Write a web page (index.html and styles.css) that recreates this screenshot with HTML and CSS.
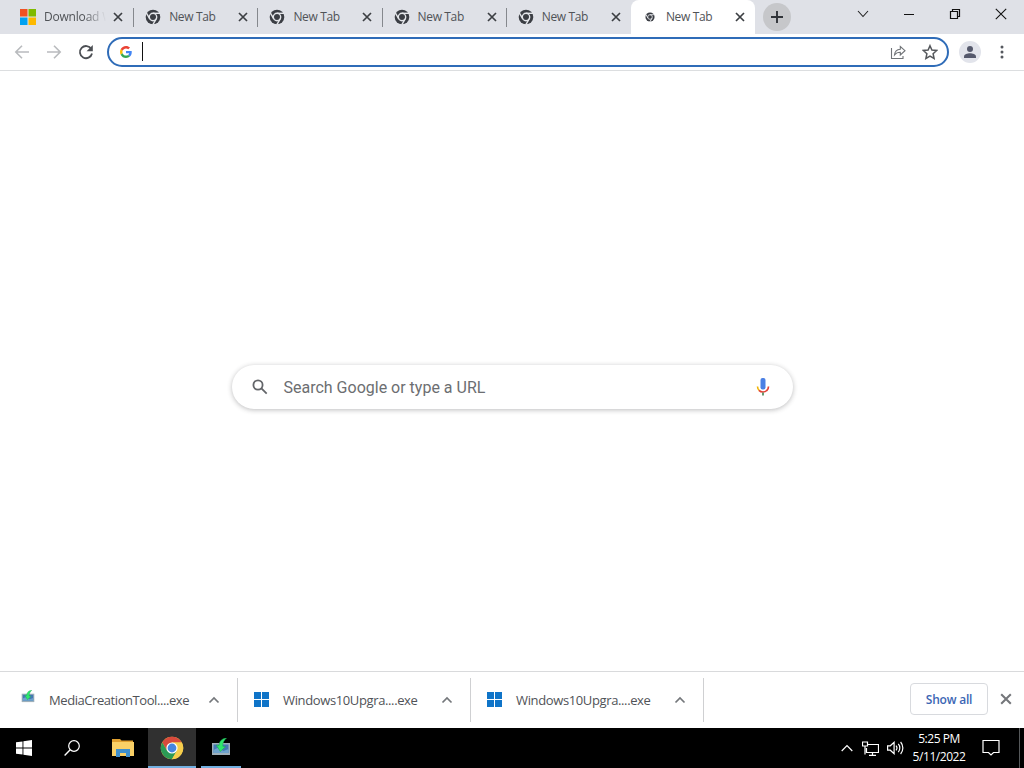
FILE: index.html
```
<!DOCTYPE html>
<html lang="en">
<head>
    <meta charset="UTF-8">
    <meta name="viewport" content="width=device-width, initial-scale=1.0">
    <title>New Tab</title>
    <link rel="stylesheet" href="styles.css">
</head>
<body>
    <!-- Shared icons -->
    <svg class="defs" width="0" height="0">
        <symbol id="chrome-gray" viewBox="0 0 16 16">
            <circle cx="8" cy="8" r="7.3" fill="#3b3e44"/>
            <g fill="none" stroke="#e4e6ea" stroke-width="1.4">
                <circle cx="8" cy="8" r="3.700"/>
                <path d="M8 4.300h7"/>
                <path d="M8 4.300h7" transform="rotate(120 8 8)"/>
                <path d="M8 4.300h7" transform="rotate(240 8 8)"/>
            </g>
        </symbol>
        <symbol id="cross" viewBox="0 0 10 10">
            <path d="M1 1l8 8M9 1L1 9" fill="none" stroke="currentColor" stroke-width="1.7"/>
        </symbol>
        <symbol id="chevron-up" viewBox="0 0 12 8">
            <path d="M1.500 6.500L6 2l4.500 4.500" fill="none" stroke="currentColor" stroke-width="1.700"/>
        </symbol>
        <symbol id="windows-blue" viewBox="0 0 15 15">
            <path d="M0 0h7v7H0zM8 0h7v7H8zM0 8h7v7H0zM8 8h7v7H8z" fill="#0f74c8"/>
        </symbol>
        <symbol id="media-tool" viewBox="0 0 20 18">
            <path d="M1 5h18v12H1z" fill="#9fb0ba"/>
            <path d="M2.500 6.500h15V15h-15z" fill="#4479b4"/>
            <path d="M2.500 12l4-2 6 3 5-2v4h-15z" fill="#6ea3cc"/>
            <path d="M15.500 0C11 .5 8.300 3 8 7.500L5.300 7l4 6.500L14.500 8.700l-2.700-.5C11.600 4.800 13 2.200 15.500 0z" fill="#2ee86c" stroke="#1ca250" stroke-width=".5"/>
        </symbol>
    </svg>

    <div class="tab-strip">
        <div class="tab first">
            <svg class="favicon" viewBox="0 0 16 16">
                <path d="M0 0h7.500v7.500H0z" fill="#f05122"/>
                <path d="M8.500 0H16v7.500H8.500z" fill="#7fba00"/>
                <path d="M0 8.500h7.500V16H0z" fill="#00a1f1"/>
                <path d="M8.500 8.500H16V16H8.500z" fill="#fdb900"/>
            </svg>
            <span class="tab-title fade">Download W</span>
            <svg class="tab-close"><use href="#cross"/></svg>
        </div>
        <div class="tab">
            <svg class="favicon"><use href="#chrome-gray"/></svg>
            <span class="tab-title">New Tab</span>
            <svg class="tab-close"><use href="#cross"/></svg>
        </div>
        <div class="tab">
            <svg class="favicon"><use href="#chrome-gray"/></svg>
            <span class="tab-title">New Tab</span>
            <svg class="tab-close"><use href="#cross"/></svg>
        </div>
        <div class="tab">
            <svg class="favicon"><use href="#chrome-gray"/></svg>
            <span class="tab-title">New Tab</span>
            <svg class="tab-close"><use href="#cross"/></svg>
        </div>
        <div class="tab last">
            <svg class="favicon"><use href="#chrome-gray"/></svg>
            <span class="tab-title">New Tab</span>
            <svg class="tab-close"><use href="#cross"/></svg>
        </div>
        <div class="tab active">
            <svg class="favicon small"><use href="#chrome-gray"/></svg>
            <span class="tab-title">New Tab</span>
            <svg class="tab-close"><use href="#cross"/></svg>
        </div>
        <div class="new-tab">
            <svg width="12" height="12" viewBox="0 0 12 12"><path d="M6 0v12M0 6h12" stroke="#303338" stroke-width="1.900"/></svg>
        </div>
        <div class="window-buttons">
            <div><svg width="12" height="12" viewBox="0 0 12 12"><path d="M1 3l5 5.500L11 3" fill="none" stroke="#222" stroke-width="1.100"/></svg></div>
            <div><svg width="12" height="12" viewBox="0 0 12 12"><path d="M1 6.500h10" stroke="#111"/></svg></div>
            <div><svg width="12" height="12" viewBox="0 0 12 12"><path d="M1.500 3.500h7v7h-7zM3.500 3V1.500h7v7H9" fill="none" stroke="#111" stroke-width="1.200"/></svg></div>
            <div><svg width="12" height="12" viewBox="0 0 12 12"><path d="M.8 .8l10.400 10.400M11.200 .8L.8 11.200" stroke="#111" stroke-width="1.100"/></svg></div>
        </div>
    </div>

    <div class="toolbar">
        <div class="nav-buttons">
            <svg class="disabled" viewBox="0 0 16 16"><path d="M15 8H2M8 1.800L1.800 8 8 14.200"/></svg>
            <svg class="disabled" viewBox="0 0 16 16"><path d="M1 8h13M8 1.800L14.200 8 8 14.200"/></svg>
            <svg class="reload" viewBox="0 0 16 16"><path d="M13.300 5A6.100 6.100 0 1 0 14 9.500"/><path class="tip" d="M14.800 1v6.200H8.600z"/></svg>
        </div>
        <div class="omnibox">
            <svg class="google" viewBox="0 0 48 48">
                <path fill="#ea4335" d="M24 9.500c3.540 0 6.710 1.220 9.210 3.600l6.850-6.850C35.900 2.380 30.470 0 24 0 14.620 0 6.510 5.380 2.560 13.220l7.980 6.190C12.430 13.720 17.740 9.500 24 9.500z"/>
                <path fill="#4285f4" d="M46.980 24.550c0-1.570-.15-3.090-.38-4.550H24v9.020h12.940c-.58 2.960-2.260 5.480-4.780 7.180l7.730 6c4.510-4.180 7.090-10.360 7.090-17.650z"/>
                <path fill="#fbbc05" d="M10.530 28.590c-.48-1.450-.76-2.990-.76-4.590s.27-3.140.76-4.590l-7.980-6.190C.92 16.460 0 20.120 0 24c0 3.880.92 7.540 2.560 10.780l7.970-6.190z"/>
                <path fill="#34a853" d="M24 48c6.480 0 11.930-2.130 15.890-5.810l-7.730-6c-2.150 1.450-4.920 2.300-8.160 2.300-6.260 0-11.570-4.220-13.470-9.910l-7.980 6.190C6.510 42.620 14.620 48 24 48z"/>
            </svg>
            <span class="caret"></span>
            <svg class="share" viewBox="0 0 16 16"><path d="M1.500 4v10.500H13V12M4.500 11c.3-3.800 2.500-5.600 5.800-5.800V2.500L15 6.700l-4.700 4.200V8.300C7.800 8.300 6 9 4.500 11z"/></svg>
            <svg class="star" viewBox="0 0 16 16"><path d="M8 1.700l1.900 4.400 4.800.4-3.600 3.200 1 4.700L8 12l-4.100 2.400 1-4.700L1.300 6.500l4.800-.4z"/></svg>
        </div>
        <div class="avatar">
            <svg width="14" height="14" viewBox="0 0 14 14"><circle cx="7" cy="4" r="3" fill="#55596c"/><path d="M1 13v-1.500C1 9.300 4.500 8.300 7 8.300s6 1 6 3.200V13z" fill="#55596c"/></svg>
        </div>
        <svg class="menu" width="4" height="14" viewBox="0 0 4 14"><g fill="#55585e"><circle cx="2" cy="2" r="1.500"/><circle cx="2" cy="7" r="1.500"/><circle cx="2" cy="12" r="1.500"/></g></svg>
    </div>

    <div class="page">
        <div class="search-box">
            <svg class="search-icon" viewBox="0 0 16 16"><circle cx="6" cy="6" r="4.600"/><path d="M9.400 9.400l5.300 5.300"/></svg>
            <span class="search-text">Search Google or type a URL</span>
            <svg class="mic" viewBox="0 0 14 18">
                <rect x="4.500" y="0" width="5" height="11.500" rx="2" fill="#4b80e4"/>
                <path d="M1.500 8.500c0 1.800.8 3.300 2 4.200" fill="none" stroke="#f0b400" stroke-width="1.600"/>
                <path d="M3 12.300c2.200 2.300 5.700 2.200 7.800.2 1.200-1 1.700-2.400 1.700-4" fill="none" stroke="#e24135" stroke-width="1.700"/>
                <path d="M7 14.500v3" stroke="#4d8a5a" stroke-width="1.700"/>
            </svg>
        </div>
    </div>

    <div class="downloads">
        <div class="download">
            <svg class="file-icon tool"><use href="#media-tool"/></svg>
            <span class="file-name media">MediaCreationTool....exe</span>
            <svg class="chevron"><use href="#chevron-up"/></svg>
        </div>
        <div class="download">
            <svg class="file-icon"><use href="#windows-blue"/></svg>
            <span class="file-name">Windows10Upgra....exe</span>
            <svg class="chevron"><use href="#chevron-up"/></svg>
        </div>
        <div class="download">
            <svg class="file-icon"><use href="#windows-blue"/></svg>
            <span class="file-name">Windows10Upgra....exe</span>
            <svg class="chevron"><use href="#chevron-up"/></svg>
        </div>
        <button class="show-all" type="button">Show all</button>
        <svg class="close-shelf"><use href="#cross"/></svg>
    </div>

    <div class="taskbar">
        <div class="task">
            <svg width="16" height="16" viewBox="0 0 16 16"><path d="M0 2.300L6.500 1.400v6.100H0zM7.400 1.200L16 0v7.500H7.400zM0 8.400h6.500v6.200L0 13.700zM7.400 8.400H16V16l-8.600-1.200z" fill="#fff"/></svg>
        </div>
        <div class="task">
            <svg width="16" height="16" viewBox="0 0 16 16"><circle cx="10" cy="6" r="5.300" fill="none" stroke="#fff" stroke-width="1.200"/><path d="M6.200 9.800L.6 15.400" stroke="#fff" stroke-width="1.400"/></svg>
        </div>
        <div class="task folder">
            <svg width="22" height="18" viewBox="0 0 22 18">
                <path d="M0 0h8l1.500 1.500H21V5H0z" fill="#e0a030"/>
                <path d="M0 3h22v14H0z" fill="#f9d067"/>
                <path d="M4 18v-8h14v8h-4v-4H8v4z" fill="#3f8fcc"/>
            </svg>
        </div>
        <div class="task running current">
            <svg width="24" height="24" viewBox="0 0 24 24">
                <circle cx="12" cy="12" r="11.200" fill="#f6cd4c"/>
                <path d="M2.300 6.400A11.200 11.200 0 0 1 21.700 6.400H12L7.150 14.800z" fill="#d84a3c"/>
                <path d="M2.300 6.400A11.200 11.200 0 0 0 12 23.200L16.850 14.800H7.150z" fill="#2b9a55"/>
                <path d="M21.700 6.400A11.200 11.200 0 0 1 12 23.200L16.850 14.800 12 6.400z" fill="#f6cd4c"/>
                <circle cx="12" cy="12" r="5.600" fill="#fff"/>
                <circle cx="12" cy="12" r="4.400" fill="#4685e0"/>
            </svg>
        </div>
        <div class="task running tool-task">
            <svg width="20" height="18"><use href="#media-tool"/></svg>
        </div>
        <div class="tray">
            <svg class="tray-up" viewBox="0 0 12 8"><path d="M.7 7L6 1.500 11.300 7"/></svg>
            <svg class="network" viewBox="0 0 17 15"><path d="M6 3.500h10.500v8H4.500V7M.5 1h5v4h-5zM3 5v8.500M7 14.300h7M10.500 11.500v2.500"/></svg>
            <svg class="volume" viewBox="0 0 17 14"><path d="M.6 4.800h2.700l3.800-3.500v11.400L3.300 9.200H.6zM9 4.700c1.100 1.300 1.100 3.300 0 4.600M11.300 2.900c2 2.300 2 5.900 0 8.200M13.600 1c3 3.400 3 8.600 0 12"/></svg>
            <div class="clock">
                <div class="time">5:25 PM</div>
                <div class="date">5/11/2022</div>
            </div>
            <svg class="notice" viewBox="0 0 18 18"><path d="M1 1.500h16v12h-5.500L9 16l-2.500-2.500H1z"/></svg>
        </div>
    </div>
</body>
</html>
```
FILE: styles.css
```
* {
    box-sizing: border-box;
}
body {
    margin: 0;
    width: 1024px;
    height: 768px;
    overflow: hidden;
    display: flex;
    flex-direction: column;
    background: #fff;
    color: #505357;
    font-family: "Open Sans", "Noto Sans", sans-serif;
    font-size: 12px;
}
svg {
    display: block;
    flex-shrink: 0;
}
.defs {
    display: none;
}

/* Tabs */
.tab-strip {
    height: 34px;
    flex-shrink: 0;
    display: flex;
    padding-left: 10px;
    background: #dfe1e7;
}
.tab {
    width: 124.200px;
    height: 34px;
    display: flex;
    align-items: center;
    padding: 0 10px 0 11px;
    background: linear-gradient(#85888d, #85888d) right 8px / 1px 19px no-repeat;
}
.tab.first {
    padding-left: 10px;
}
.tab.last {
    background: none;
}
.tab.active {
    background: #fff;
    border-radius: 8px 8px 0 0;
}
.favicon {
    width: 16px;
    height: 16px;
}
.favicon.small {
    width: 10px;
    height: 10px;
    margin: 0 3px;
}
.tab-title {
    width: 64px;
    margin-left: 8px;
    white-space: nowrap;
    line-height: 18px;
    letter-spacing: -0.350px;
}
.tab-title.fade {
    letter-spacing: -0.200px;
    -webkit-mask-image: linear-gradient(90deg, #000 40px, transparent 62px);
    mask-image: linear-gradient(90deg, #000 40px, transparent 62px);
}
.tab-close {
    width: 10px;
    height: 10px;
    margin-left: 5px;
    color: #3c3f43;
}
.new-tab {
    width: 28px;
    height: 28px;
    margin: 3px 0 0 8px;
    display: flex;
    align-items: center;
    justify-content: center;
    border-radius: 50%;
    background: #c6c7ca;
}
.window-buttons {
    display: flex;
    height: 28px;
    margin-left: auto;
}
.window-buttons div {
    width: 46px;
    display: flex;
    align-items: center;
    justify-content: center;
}

/* Toolbar */
.toolbar {
    height: 37px;
    flex-shrink: 0;
    display: flex;
    align-items: center;
    padding-left: 14px;
    border-bottom: 1px solid #dcdee0;
}
.nav-buttons {
    display: flex;
    gap: 16px;
}
.nav-buttons svg {
    width: 16px;
    height: 16px;
    fill: none;
    stroke: #4c4f54;
    stroke-width: 1.800;
}
.nav-buttons .disabled {
    stroke: #b9bbbe;
    stroke-width: 1.600;
}
.nav-buttons .tip {
    fill: #4c4f54;
    stroke: none;
}
.omnibox {
    width: 842px;
    height: 30px;
    margin-left: 13px;
    display: flex;
    align-items: center;
    padding: 0 9px 0 11px;
    border: 2px solid #2f6cb8;
    border-radius: 15px;
}
.google {
    width: 12px;
    height: 12px;
}
.caret {
    width: 1px;
    height: 19px;
    margin: 0 auto 2px 10px;
    background: #111;
}
.share, .star {
    width: 16px;
    height: 16px;
    fill: none;
    stroke: #707377;
    stroke-width: 1.100;
}
.star {
    margin-left: 16px;
    stroke: #55585c;
    stroke-width: 1.500;
}
.avatar {
    width: 22px;
    height: 22px;
    margin-left: 10px;
    display: flex;
    align-items: center;
    justify-content: center;
    border-radius: 50%;
    background: #e2e4eb;
}
.menu {
    margin-left: 19px;
}

/* New tab page */
.page {
    flex: 1;
    display: flex;
    align-items: flex-start;
    justify-content: center;
    padding-top: 294px;
}
.search-box {
    width: 561px;
    height: 44px;
    display: flex;
    align-items: center;
    padding: 0 23px 0 20px;
    border-radius: 22px;
    background: #fff;
    box-shadow: 0 1px 5px rgba(32, 33, 36, 0.3);
}
.search-icon {
    width: 16px;
    height: 16px;
    fill: none;
    stroke: #636569;
    stroke-width: 1.800;
}
.search-text {
    margin: 0 auto 0 16px;
    color: #6c6e71;
    font-family: Roboto, sans-serif;
    font-size: 16px;
}
.mic {
    width: 14px;
    height: 18px;
}

/* Downloads shelf */
.downloads {
    height: 57px;
    flex-shrink: 0;
    display: flex;
    align-items: center;
    padding-left: 5px;
    border-top: 1px solid #d9dadc;
}
.download {
    width: 233px;
    height: 44px;
    display: flex;
    align-items: center;
    padding: 0 17px 2px 16px;
    border-right: 1px solid #cfd0d2;
}
.file-icon {
    width: 15px;
    height: 15px;
}
.file-icon.tool {
    width: 14px;
    height: 13px;
    margin-bottom: 5px;
}
.file-name {
    margin: 2px auto 0 14px;
    font-size: 13px;
    line-height: 18px;
    letter-spacing: -0.370px;
    white-space: nowrap;
}
.file-name.media {
    letter-spacing: -0.430px;
}
.chevron {
    width: 12px;
    height: 8px;
    margin-top: 2px;
    color: #74777b;
}
.show-all {
    width: 78px;
    height: 32px;
    margin: 0 12px 2px auto;
    padding: 0;
    border: 1px solid #d8dade;
    border-radius: 4px;
    background: #fff;
    color: #3c66b4;
    font: 600 12px "Open Sans", sans-serif;
    letter-spacing: -0.200px;
}
.close-shelf {
    width: 12px;
    height: 12px;
    margin: 0 12px 2px 0;
    color: #74767a;
}

/* Taskbar */
.taskbar {
    height: 40px;
    flex-shrink: 0;
    display: flex;
    background: #000;
    color: #fff;
}
.task {
    width: 48px;
    display: flex;
    align-items: center;
    justify-content: center;
}
.task.folder {
    width: 50px;
    padding-left: 3px;
    margin-right: 2px;
}
.task.running {
    padding-top: 2px;
    border-bottom: 2px solid #72afe0;
}
.task.current {
    background: #303030;
}
.task.tool-task {
    width: 40px;
    margin-left: 5px;
    padding: 0 0 1px;
}
.tray {
    display: flex;
    align-items: center;
    margin-left: auto;
    padding-right: 24px;
    background: linear-gradient(#55585a, #55585a) right 4px top 0 / 1px 100% no-repeat;
}
.tray svg {
    fill: none;
    stroke: #fff;
    stroke-width: 1.200;
}
.tray-up {
    width: 12px;
    height: 8px;
}
.network {
    width: 17px;
    height: 15px;
    margin-left: 9px;
}
.volume {
    width: 17px;
    height: 14px;
    margin-left: 8px;
}
.clock {
    width: 60px;
    margin-left: 5px;
    text-align: center;
    line-height: 18px;
    white-space: nowrap;
}
.time, .date {
    letter-spacing: -0.450px;
}
.notice {
    width: 18px;
    height: 18px;
    margin-left: 13px;
}
```
